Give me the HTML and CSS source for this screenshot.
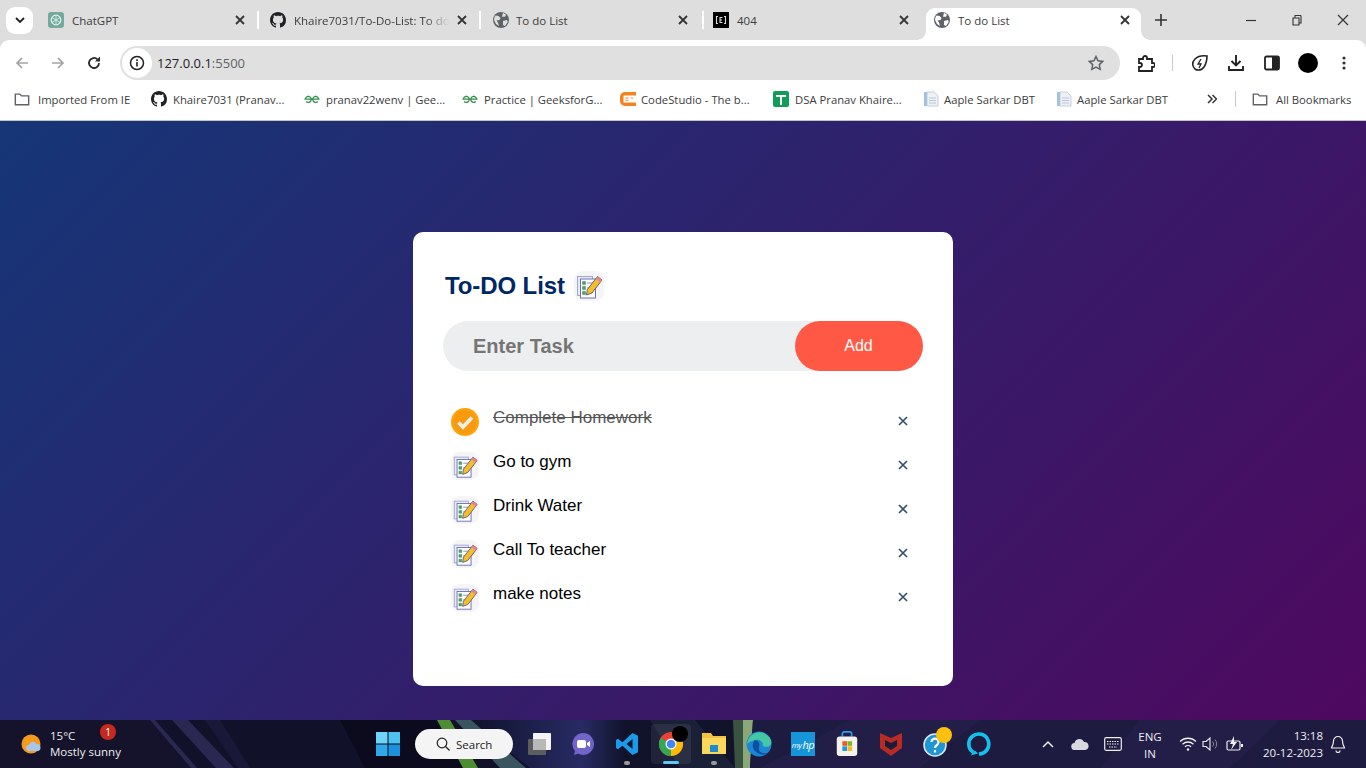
FILE: index.html
```html
<!DOCTYPE html>
<html lang="en">
<head>
<meta charset="utf-8">
<title>To do List</title>
<link rel="stylesheet" href="styles.css">
</head>
<body>
<svg class="defs" width="0" height="0" aria-hidden="true">
  <defs>
    <symbol id="globe" viewBox="0 0 16 16"><circle cx="8" cy="8" r="8" fill="#5f6368"/><path d="M2.500 3.500l3 .5 2 2-1 2-3 .5 1.500 2 1 3.500-3-2-2-4 .5-3zM10 .8l3 2-1 2-3 0zM10 9l4-1 .8 2-2.800 4-2-1z" fill="#dedede"/></symbol>
    <symbol id="globe-w" viewBox="0 0 16 16"><circle cx="8" cy="8" r="8" fill="#5f6368"/><path d="M2.500 3.500l3 .5 2 2-1 2-3 .5 1.500 2 1 3.500-3-2-2-4 .5-3zM10 .8l3 2-1 2-3 0zM10 9l4-1 .8 2-2.800 4-2-1z" fill="#fff"/></symbol>
    <symbol id="cross" viewBox="0 0 10 10"><path d="M1 1l8 8M9 1l-8 8" stroke="#333" stroke-width="1.800" fill="none"/></symbol>
    <symbol id="folder" viewBox="0 0 18 16"><path d="M1.500 2.500h5l2 2h8v10h-15z" fill="none" stroke="#5f6368" stroke-width="1.600"/></symbol>
    <symbol id="github" viewBox="0 0 16 16"><path fill="#202124" d="M8 0C3.580 0 0 3.580 0 8c0 3.540 2.290 6.530 5.470 7.590.4.07.55-.17.55-.38 0-.19-.01-.82-.01-1.490-2.010.37-2.530-.49-2.690-.94-.09-.23-.48-.94-.82-1.130-.28-.15-.68-.52-.01-.53.63-.01 1.080.58 1.230.82.72 1.210 1.870.87 2.330.66.07-.52.28-.87.51-1.070-1.780-.2-3.640-.89-3.640-3.950 0-.87.31-1.590.82-2.150-.08-.2-.36-1.020.08-2.120 0 0 .67-.21 2.200.82.64-.18 1.320-.27 2-.27s1.360.09 2 .27c1.530-1.040 2.200-.82 2.200-.82.44 1.100.16 1.920.08 2.120.51.56.82 1.270.82 2.150 0 3.070-1.870 3.750-3.650 3.950.29.25.54.73.54 1.480 0 1.070-.01 1.930-.01 2.200 0 .21.15.46.55.38A8 8 0 0 0 16 8c0-4.420-3.580-8-8-8z"/></symbol>
    <symbol id="gfg" viewBox="0 0 16 16"><path d="M.5 8.200h15M1.300 8.200a3 3 0 1 1 .9 2.300M14.700 8.200a3 3 0 1 0-.9 2.300M7.300 8.200a3 3 0 0 0-4.600-2.300M8.700 8.200a3 3 0 0 1 4.600-2.300" fill="none" stroke="#2f8d46" stroke-width="1.200"/></symbol>
    <symbol id="doc" viewBox="0 0 16 16"><path d="M1 1h4v14H1z" fill="#9cc3e6"/><path d="M4 1h7l4 4v10H4z" fill="#eef2f7" stroke="#b8c4d4" stroke-width=".8"/><path d="M6 7h7M6 9.500h7M6 12h7" stroke="#b9c6d6"/></symbol>
    <symbol id="notes" viewBox="0 0 30 30">
      <rect x="0" y="0" width="30" height="30" rx="9" fill="#f5f5f8"/>
      <rect x="3.500" y="5.500" width="15" height="19" fill="#e8eaf6" stroke="#a2a5d4"/>
      <rect x="6.500" y="8" width="15" height="19" fill="#fff" stroke="#6d71b5"/>
      <path d="M8.500 10.500h3v3h-3zM8.500 15.500h3v3h-3zM8.500 20.500h3v3h-3z" fill="#4fa36b" stroke="#3d8c58" stroke-width=".5"/>
      <path d="M13 12h6M13 17h2M13 22h2" stroke="#8d90c8"/>
      <path d="M23.500 5.500l4.500 3.500-10 13-5.500 2 .8-5.500z" fill="#f6bd2a" stroke="#55557a" stroke-width=".9"/>
      <path d="M23.500 5.500l4.500 3.500-1.800 2.300-4.500-3.500z" fill="#e8808e"/>
    </symbol>
    <symbol id="task-x" viewBox="0 0 10 10"><path d="M1 1l8 8M9 1l-8 8" stroke="#33506f" stroke-width="1.700"/></symbol>
    <linearGradient id="wall-blue" gradientUnits="userSpaceOnUse" x1="480" y1="0" x2="625" y2="0">
      <stop offset="0" stop-color="#12142f"/>
      <stop offset=".7" stop-color="#272b63"/>
      <stop offset="1" stop-color="#11132b"/>
    </linearGradient>
  </defs>
</svg>

<header class="chrome">
  <div class="tabstrip">
    <div class="tablist-btn"><svg width="10" height="6" viewBox="0 0 10 6"><path d="M1 1l4 4 4-4" stroke="#222" stroke-width="1.800" fill="none"/></svg></div>
    <div class="tab tab-a">
      <svg class="fav" viewBox="0 0 16 16"><rect width="16" height="16" rx="3" fill="#74aa9c"/><circle cx="8" cy="8" r="4.800" fill="none" stroke="#e5f0ed" stroke-width="1.200"/><path d="M8 3.200v9.600M3.800 5.600l8.400 4.800M12.200 5.600l-8.400 4.800" stroke="#e5f0ed" stroke-width=".8"/></svg>
      <span class="tab-title">ChatGPT</span>
      <svg class="tab-x"><use href="#cross"/></svg>
    </div>
    <i class="tab-sep"></i>
    <div class="tab tab-b">
      <svg class="fav"><use href="#github"/></svg>
      <span class="tab-title fade">Khaire7031/To-Do-List: To do</span>
      <svg class="tab-x"><use href="#cross"/></svg>
    </div>
    <i class="tab-sep"></i>
    <div class="tab tab-c">
      <svg class="fav"><use href="#globe"/></svg>
      <span class="tab-title">To do List</span>
      <svg class="tab-x"><use href="#cross"/></svg>
    </div>
    <i class="tab-sep"></i>
    <div class="tab tab-d">
      <svg class="fav" viewBox="0 0 16 16"><rect width="16" height="16" fill="#000"/><path d="M5 4.500H3.500v7H5M11 4.500h1.500v7H11M9.500 5.500H7v5h2.500M7 8h2" fill="none" stroke="#ddd" stroke-width="1.100"/></svg>
      <span class="tab-title">404</span>
      <svg class="tab-x"><use href="#cross"/></svg>
    </div>
    <div class="tab tab-active">
      <svg class="fav"><use href="#globe-w"/></svg>
      <span class="tab-title">To do List</span>
      <svg class="tab-x"><use href="#cross"/></svg>
    </div>
    <svg class="newtab" width="12" height="12" viewBox="0 0 12 12"><path d="M6 0v12M0 6h12" stroke="#333" stroke-width="1.600"/></svg>
    <div class="winctl">
      <svg width="12" height="12" viewBox="0 0 12 12"><path d="M1 6.500h10" stroke="#333" stroke-width="1.200"/></svg>
      <svg width="12" height="12" viewBox="0 0 12 12"><path d="M2 4h6v7H2zM4 4V1.500h5.500l.5.500v7H8" fill="none" stroke="#333" stroke-width="1.100"/></svg>
      <svg width="12" height="12" viewBox="0 0 12 12"><path d="M1 1l10 10M11 1L1 11" stroke="#333" stroke-width="1.200"/></svg>
    </div>
  </div>
  <div class="toolbar">
    <svg class="nav nav-back" viewBox="0 0 16 16"><path d="M14 8H3M8 3L3 8l5 5" fill="none" stroke="#a2a4a6" stroke-width="1.700"/></svg>
    <svg class="nav nav-fwd" viewBox="0 0 16 16"><path d="M2 8h11M8 3l5 5-5 5" fill="none" stroke="#a2a4a6" stroke-width="1.700"/></svg>
    <svg class="nav nav-reload" viewBox="0 0 16 16"><path d="M13 8a5 5 0 1 1-1.500-3.600" fill="none" stroke="#2a2a2a" stroke-width="1.800"/><path d="M14 1.500V6.500H9z" fill="#2a2a2a"/></svg>
    <div class="omnibox">
      <div class="site-info"><svg width="16" height="16" viewBox="0 0 16 16"><circle cx="8" cy="8" r="6.500" fill="none" stroke="#222" stroke-width="1.500"/><path d="M8 7v4.500M8 4.300v1.600" stroke="#222" stroke-width="1.600"/></svg></div>
      <span class="url">127.0.0.1<span class="port">:5500</span></span>
      <svg class="star" width="16" height="16" viewBox="0 0 16 16"><path d="M8 1.500l2 4.300 4.700.6-3.400 3.200.9 4.700L8 12l-4.200 2.300.9-4.700L1.300 6.400 6 5.800z" fill="none" stroke="#5f6368" stroke-width="1.500"/></svg>
    </div>
    <div class="tools">
      <svg class="t-ext" width="18" height="18" viewBox="0 0 18 18"><path d="M2 5h4V4a2 2 0 0 1 4 0v1h5v4h1a2 2 0 0 1 0 4h-1v4H2v-4h1a2 2 0 0 0 0-4H2z" fill="none" stroke="#222" stroke-width="1.800"/></svg>
      <i class="t-sep"></i>
      <svg class="t-perf" width="18" height="18" viewBox="0 0 18 18"><path d="M16 2c0 0-8-1-12 3S2 13 4 15c3 2 7 1 9-2s3-8 3-11z" fill="none" stroke="#222" stroke-width="1.600"/><path d="M10 5l-3 5h3l-2 4" fill="none" stroke="#222" stroke-width="1.300"/></svg>
      <svg class="t-dl" width="16" height="18" viewBox="0 0 16 18"><path d="M8 1v10M3.500 7L8 11.500 12.500 7M1 12v4h14v-4" fill="none" stroke="#222" stroke-width="1.900"/></svg>
      <svg class="t-side" width="16" height="16" viewBox="0 0 16 16"><rect x="1" y="1.500" width="14" height="13" rx="1.500" fill="#fff" stroke="#222" stroke-width="1.800"/><rect x="8" y="1.500" width="7" height="13" fill="#222"/></svg>
      <i class="t-avatar"></i>
      <svg class="t-menu" width="4" height="14" viewBox="0 0 4 14"><circle cx="2" cy="2" r="1.600" fill="#333"/><circle cx="2" cy="7" r="1.600" fill="#333"/><circle cx="2" cy="12" r="1.600" fill="#333"/></svg>
    </div>
  </div>
  <nav class="bookmarks">
    <a class="bm bm1"><svg class="bm-ico"><use href="#folder"/></svg>Imported From IE</a>
    <a class="bm bm2"><svg class="bm-ico"><use href="#github"/></svg>Khaire7031 (Pranav...</a>
    <a class="bm bm3"><svg class="bm-ico"><use href="#gfg"/></svg>pranav22wenv | Gee...</a>
    <a class="bm bm4"><svg class="bm-ico"><use href="#gfg"/></svg>Practice | GeeksforG...</a>
    <a class="bm bm5"><svg class="bm-ico" viewBox="0 0 16 16"><path d="M5 1h11v14H5a5 5 0 0 1-5-5V6a5 5 0 0 1 5-5z" fill="#f58220"/><path d="M3.500 4.500h12.500v7H3.500z" fill="#fff"/><path d="M5.500 7h3M5.500 9.300h3M11 7h2" stroke="#f58220" stroke-width="1.100"/></svg>CodeStudio - The b...</a>
    <a class="bm bm6"><svg class="bm-ico" viewBox="0 0 16 16"><rect width="16" height="16" rx="2" fill="#0f9d58"/><path d="M3 5h10M8 5v9" stroke="#fff" stroke-width="2"/></svg>DSA Pranav Khaire...</a>
    <a class="bm bm7"><svg class="bm-ico"><use href="#doc"/></svg>Aaple Sarkar DBT</a>
    <a class="bm bm8"><svg class="bm-ico"><use href="#doc"/></svg>Aaple Sarkar DBT</a>
    <svg class="chev" width="10" height="10" viewBox="0 0 10 10"><path d="M1 1l4 4-4 4M5.500 1l4 4-4 4" fill="none" stroke="#333" stroke-width="1.500"/></svg>
    <i class="bm-sep"></i>
    <a class="bm bm9"><svg class="bm-ico"><use href="#folder"/></svg>All Bookmarks</a>
  </nav>
</header>

<main class="page">
  <section class="todo-app">
    <h2 class="todo-title">To-DO List <svg class="title-icon"><use href="#notes"/></svg></h2>
    <div class="add-row">
      <span class="placeholder">Enter Task</span>
      <button class="add-btn" type="button">Add</button>
    </div>
    <ul class="tasks">
      <li class="task done">
        <svg class="task-icon" viewBox="0 0 28 28"><circle cx="14" cy="14" r="14" fill="#ffa20a"/><circle cx="14" cy="14" r="11.500" fill="#f89a10"/><path d="M7.500 14.500l4.500 4.500 9-9.500" fill="none" stroke="#f3eee6" stroke-width="3.800"/></svg>
        <span class="task-text">Complete Homework</span>
        <svg class="task-x"><use href="#task-x"/></svg>
      </li>
      <li class="task"><svg class="task-icon"><use href="#notes"/></svg><span class="task-text">Go to gym</span><svg class="task-x"><use href="#task-x"/></svg></li>
      <li class="task"><svg class="task-icon"><use href="#notes"/></svg><span class="task-text">Drink Water</span><svg class="task-x"><use href="#task-x"/></svg></li>
      <li class="task"><svg class="task-icon"><use href="#notes"/></svg><span class="task-text">Call To teacher</span><svg class="task-x"><use href="#task-x"/></svg></li>
      <li class="task"><svg class="task-icon"><use href="#notes"/></svg><span class="task-text">make notes</span><svg class="task-x"><use href="#task-x"/></svg></li>
    </ul>
  </section>
</main>

<footer class="taskbar">
  <svg class="wallpaper" width="1366" height="48" viewBox="0 0 1366 48" aria-hidden="true">
    <rect width="1366" height="48" fill="#12112a"/>
    <path d="M0 0h150L190 48H0z" fill="#15132c"/>
    <path d="M150 0h5l42 48h-6zM172 0h16l46 48h-18z" fill="#2a2750"/>
    <path d="M205 0h15l30 48h-12z" fill="#1a1838"/>
    <path d="M340 0h95l30 48H365z" fill="#0c0b1d"/>
    <path d="M470 0h155v48H530z" fill="url(#wall-blue)"/>
    <path d="M455 0h16l55 48h-26z" fill="#3a5560"/>
    <path d="M437 0h13l28 48h-15z" fill="#4f8d34"/>
    <path d="M625 0h110v48H625z" fill="#10132a"/>
    <path d="M650 0h45l40 48h-55z" fill="#1a2036"/>
    <path d="M733 0h10v48h-8z" fill="#3a5341"/>
    <path d="M743 0h10l-3 48h-7z" fill="#8aa87a"/>
    <path d="M753 0h613v48H750z" fill="#1e1b40"/>
    <path d="M760 48l90-48h130l-60 48zM1140 0h140l-50 48h-130z" fill="#221e48"/>
  </svg>
  <div class="weather">
    <svg width="22" height="22" viewBox="0 0 22 22"><circle cx="10" cy="11" r="9.500" fill="#f59a1b"/><path d="M8 18a3 3 0 0 1 0-6 4 4 0 0 1 7.500-1 3.500 3.500 0 0 1 4 3.500 3 3 0 0 1-3 3.500z" fill="#a8c6ec"/></svg>
    <div class="weather-text"><span>15°C</span><span>Mostly sunny</span></div>
    <b class="badge">1</b>
  </div>
  <div class="center-icons">
    <svg class="ti-win" width="24" height="24" viewBox="0 0 24 24"><path d="M0 0h11.500v11.500H0z" fill="#6fd5f8"/><path d="M12.500 0H24v11.500H12.500z" fill="#4cc2f1"/><path d="M0 12.500h11.500V24H0z" fill="#2ea8e8"/><path d="M12.500 12.500H24V24H12.500z" fill="#1b90dd"/></svg>
    <div class="search"><svg width="14" height="14" viewBox="0 0 14 14"><circle cx="6" cy="6" r="4.800" fill="none" stroke="#222" stroke-width="1.200"/><path d="M9.500 9.500l4 4" stroke="#222" stroke-width="1.300"/></svg><span>Search</span></div>
    <svg class="ti ti-task" width="24" height="24" viewBox="0 0 24 24"><rect x="5" y="1" width="18" height="17" rx="1" fill="#f4f4f4"/><rect x="0" y="7" width="18" height="16" rx="1" fill="#5d5d5d"/><rect x="5" y="7" width="13" height="11" fill="#b8b8b8"/></svg>
    <svg class="ti ti-meet" width="24" height="24" viewBox="0 0 24 24"><path d="M12 1a11 11 0 1 1-5 20.800L3 23l1-4A11 11 0 0 1 12 1z" fill="#7165c9"/><rect x="6" y="8" width="9" height="8" rx="2" fill="#fff"/><path d="M16 11l3-2v6l-3-2z" fill="#fff"/></svg>
    <div class="ti-wrap"><svg class="ti" width="24" height="24" viewBox="0 0 24 24"><path fill-rule="evenodd" d="M17.500 1L23 3.700V20.300L17.500 23 7.500 13.800 3 17.300 1 16V8L3 6.700 7.500 10.200zM17.500 7l-6 5 6 5z" fill="#1a9ae8"/></svg><i class="dot"></i></div>
    <div class="ti-wrap chrome-tile"><svg class="ti" width="24" height="24" viewBox="0 0 24 24"><circle cx="12" cy="12" r="12" fill="#ea4335"/><path d="M12 12L1.600 6A12 12 0 0 0 12 24z" fill="#34a853"/><path d="M12 12v12A12 12 0 0 0 23 7H12z" fill="#fbbc05"/><circle cx="12" cy="12" r="5.500" fill="#fff"/><circle cx="12" cy="12" r="4.300" fill="#4285f4"/></svg><i class="chrome-badge"></i><i class="active-bar"></i></div>
    <div class="ti-wrap ti-folder"><svg class="ti" width="26" height="24" viewBox="0 0 26 24"><path d="M1 1h9l2 3h13v18H1z" fill="#f5c242"/><path d="M1 6h24v16H1z" fill="#fbd75b"/><path d="M9 13h8v7H9z" fill="#1e88d2"/></svg><i class="dot dot-folder"></i></div>
    <svg class="ti ti-edge" width="26" height="26" viewBox="0 0 26 26"><circle cx="13" cy="13" r="12.500" fill="#1b86d4"/><path d="M1 13A12.500 12.500 0 0 1 25 9c1 3 0 7-5 7-3 0-4-1.500-3-3-1-3-4-5-8-4-4 1-7 3-8 4z" fill="#44c7a4"/><path d="M9 9c-3 3-3 8 0 11s8 5 12 2c-6 1-9-2-8-6s0-6-4-7z" fill="#0e4f9e"/></svg>
    <div class="ti ti-hp"><span>my</span><span class="hp">hp</span></div>
    <svg class="ti ti-store" width="24" height="26" viewBox="0 0 24 28"><path d="M7 6V3a2 2 0 0 1 2-2h6a2 2 0 0 1 2 2v3" fill="none" stroke="#2aa0ea" stroke-width="1.800"/><rect x="1" y="6" width="22" height="21" rx="3" fill="#f5f2ee"/><path d="M7 11h5v5H7z" fill="#ee5a2a"/><path d="M12.500 11h5v5h-5z" fill="#7cb82a"/><path d="M7 16.500h5v5H7z" fill="#1e9ae0"/><path d="M12.500 16.500h5v5h-5z" fill="#fbb81c"/></svg>
    <svg class="ti ti-mcafee" width="24" height="24" viewBox="0 0 24 24"><path d="M1 1l11 5 11-5v15l-11 8-11-8z" fill="#b62c25"/><path d="M6 8l6 3 6-3v6l-6 4-6-4z" fill="#1d1b36"/></svg>
    <div class="ti ti-help"><svg width="26" height="26" viewBox="0 0 26 26"><circle cx="12" cy="14" r="11" fill="#1f95d6" stroke="#dfeaf4" stroke-width="1.500"/><path d="M8.500 11a3.500 3.500 0 1 1 6 2.500c-1.500 1-2.500 1.500-2.500 3.500M12 19v2.500" fill="none" stroke="#fff" stroke-width="2.200"/></svg><i class="help-dot"></i></div>
    <svg class="ti ti-alexa" width="24" height="24" viewBox="0 0 24 24"><path d="M6.500 20.500A10 10 0 1 1 12 22" fill="none" stroke="#12c2ee" stroke-width="3.600"/><path d="M3.500 23.500l4.500-5 3 3z" fill="#12c2ee"/></svg>
  </div>
  <div class="tray">
    <svg class="tr-up" width="12" height="8" viewBox="0 0 12 8"><path d="M1 7l5-5 5 5" fill="none" stroke="#eee" stroke-width="1.500"/></svg>
    <svg class="tr-cloud" width="18" height="12" viewBox="0 0 18 12"><path d="M4 12a3.500 3.500 0 0 1-.5-7A5 5 0 0 1 13 4a4 4 0 0 1 1 8z" fill="#d8d8de"/></svg>
    <svg class="tr-kbd" width="18" height="14" viewBox="0 0 18 14"><rect x=".7" y=".7" width="16.600" height="12.600" rx="1.500" fill="none" stroke="#eee" stroke-width="1.200"/><path d="M3 4.500h12M3 7h12M5 10h8" stroke="#eee" stroke-width="1.100" stroke-dasharray="1.500 1"/></svg>
    <div class="lang"><span>ENG</span><span>IN</span></div>
    <svg class="tr-wifi" width="18" height="14" viewBox="0 0 18 14"><path d="M1 4.500a11.500 11.500 0 0 1 16 0M3.500 7.200a8 8 0 0 1 11 0M6 9.800a4.300 4.300 0 0 1 6 0" fill="none" stroke="#eee" stroke-width="1.300"/><circle cx="9" cy="12.500" r="1.200" fill="#eee"/></svg>
    <svg class="tr-vol" width="16" height="14" viewBox="0 0 16 14"><path d="M1 4.500h3L8 1v12L4 9.500H1z" fill="none" stroke="#eee" stroke-width="1.100"/><path d="M10.500 4.500a3.500 3.500 0 0 1 0 5M13 2.500a7 7 0 0 1 0 9" fill="none" stroke="#8a8a8f" stroke-width="1"/></svg>
    <svg class="tr-bat" width="18" height="16" viewBox="0 0 18 16"><rect x="1" y="5" width="13" height="9" rx="1.500" fill="none" stroke="#eee" stroke-width="1.200"/><path d="M15 8h2v3h-2z" fill="#eee"/><path d="M8 0L4 8h3l-2 6 6-8H8z" fill="#eee"/></svg>
    <div class="clock"><span>13:18</span><span>20-12-2023</span></div>
    <svg class="tr-bell" width="16" height="18" viewBox="0 0 16 18"><path d="M8 1.500a4.500 4.500 0 0 0-4.500 4.500c0 4-2 6-2 7h13c0-1-2-3-2-7A4.500 4.500 0 0 0 8 1.500zM6 15.500a2 2 0 0 0 4 0" fill="none" stroke="#eee" stroke-width="1.200"/></svg>
  </div>
</footer>
</body>
</html>
```
FILE: styles.css
```css
* { box-sizing: border-box; }
html, body { margin: 0; height: 768px; overflow: hidden; }
body { width: 1366px; display: flex; flex-direction: column; font-family: "Liberation Sans", Arial, sans-serif; }
.defs { position: absolute; }

/* browser chrome */
.chrome { height: 121px; flex: none; background: #dedede; border-bottom: 1px solid #c4c4c4; font-family: "Open Sans", "Noto Sans", sans-serif; color: #3c3c3c; }
.tabstrip { height: 40px; display: flex; align-items: center; }
.tablist-btn { width: 27px; height: 27px; margin-left: 6px; background: #fff; border-radius: 9px; display: flex; align-items: center; justify-content: center; flex: none; }
.tab { height: 32px; display: flex; align-items: center; flex: none; font-size: 11.500px; }
.tab-a { width: 220px; padding-left: 10px; margin-left: 5px; }
.tab-b { width: 222px; padding-left: 12px; }
.tab-c { width: 223px; padding-left: 13px; }
.tab-d { width: 223px; padding-left: 10px; }
.tab-active { width: 215px; align-self: flex-end; padding: 0 0 8px 8px; background: #fff; border-radius: 9px 9px 0 0; position: relative; }
.tab-active::before, .tab-active::after { content: ""; position: absolute; bottom: 0; width: 9px; height: 9px; }
.tab-active::before { left: -9px; background: radial-gradient(circle at 0 0, transparent 8.500px, #fff 9px); }
.tab-active::after { right: -9px; background: radial-gradient(circle at 100% 0, transparent 8.500px, #fff 9px); }
.fav { width: 16px; height: 16px; flex: none; }
.tab-title { margin-left: 8px; flex: 1; white-space: nowrap; overflow: hidden; }
.tab-c .tab-title { margin-left: 7px; }
.fade { -webkit-mask-image: linear-gradient(90deg, #000 85%, transparent); mask-image: linear-gradient(90deg, #000 85%, transparent); }
.tab-x { width: 10px; height: 10px; flex: none; margin-left: 8px; }
.tab-a .tab-x, .tab-b .tab-x { margin-right: 13px; }
.tab-c .tab-x { margin-right: 15px; }
.tab-d .tab-x { margin-right: 17px; }
.tab-active .tab-x { margin-right: 11px; }
.tab-sep { width: 2px; height: 18px; background: #fff; flex: none; margin: 0 -1px; }
.newtab { flex: none; margin-left: 14px; }
.winctl { margin-left: auto; display: flex; gap: 34px; padding-right: 17px; }

.toolbar { height: 46px; display: flex; align-items: center; background: #fff; border-radius: 9px 9px 0 0; }
.nav { width: 16px; height: 16px; flex: none; margin-left: 20px; }
.nav-back { margin-left: 14px; }
.omnibox { width: 1000px; height: 34px; margin-left: 18px; background: #e0e0e0; border-radius: 17px; display: flex; align-items: center; padding-left: 2px; flex: none; }
.site-info { width: 30px; height: 30px; background: #fff; border-radius: 50%; display: flex; align-items: center; justify-content: center; }
.url { margin-left: 5px; font-size: 13px; color: #222; }
.port { color: #5f6368; }
.star { margin-left: auto; margin-right: 16px; }
.tools { display: flex; align-items: center; flex: none; margin-left: 17px; }
.t-sep { width: 1px; height: 16px; background: #c8c8c8; margin: 0 18px 0 17px; }
.t-dl { margin-left: 19px; }
.t-side { margin-left: 20px; }
.t-avatar { width: 20px; height: 20px; background: #000; border-radius: 50%; margin-left: 18px; }
.t-menu { margin-left: 24px; }

.bookmarks { height: 34px; padding-bottom: 8px; display: flex; align-items: center; font-size: 11.300px; background: #fff; }
.bm { display: flex; align-items: center; white-space: nowrap; flex: none; }
.bm-ico { width: 16px; height: 16px; margin-right: 6px; flex: none; }
.bm1 { margin-left: 14px; width: 137px; }
.bm1 .bm-ico, .bm9 .bm-ico { margin-right: 8px; }
.bm2 { width: 153px; }
.bm3 { width: 158px; }
.bm4 { width: 158px; }
.bm5 { width: 153px; }
.bm5 .bm-ico, .bm7 .bm-ico, .bm8 .bm-ico { margin-right: 5px; }
.bm6 { width: 150px; }
.bm7 { width: 133px; }
.bm8 { width: 143px; }
.chev { margin-left: 8px; flex: none; }
.bm-sep { width: 1px; height: 16px; background: #c8c8c8; margin-left: 18px; flex: none; }
.bm9 { margin-left: 16px; }

/* page */
.page { height: 599px; flex: none; background: linear-gradient(135deg, #153677, #4e085f); padding-top: 111px; }
.todo-app { width: 540px; height: 454px; margin: 0 auto; background: #fff; border-radius: 10px; padding: 40px 30px 70px; }
.todo-title { margin: 0 0 21px; height: 28px; display: flex; align-items: center; color: #002765; font-size: 24px; font-weight: 700; padding-left: 2px; letter-spacing: -.1px; }
.title-icon { width: 30px; height: 30px; margin-left: 9px; flex: none; }
.add-row { height: 50px; display: flex; align-items: center; justify-content: space-between; background: #edeef0; border-radius: 30px; padding-left: 30px; margin-bottom: 25px; }
.placeholder { font-size: 20px; font-weight: 700; color: #757575; }
.add-btn { width: 128px; height: 50px; border: 0; padding: 0 1px 1px 0; background: #ff5945; color: #fff; font: 16px "Liberation Sans", Arial, sans-serif; border-radius: 40px; }
.tasks { list-style: none; margin: 0; padding: 0; }
.task { height: 44px; position: relative; padding: 12px 8px 12px 50px; font-size: 17px; line-height: 20px; color: #000; }
.task-icon { position: absolute; left: 8px; top: 12px; width: 28px; height: 28px; }
.task-x { position: absolute; left: 455px; top: 20px; width: 10px; height: 10px; }
.done .task-text { color: #555; text-decoration: line-through; }

/* taskbar */
.taskbar { height: 48px; flex: 1; position: relative; color: #eee; font-family: "Open Sans", "Noto Sans", sans-serif; overflow: hidden; }
.wallpaper { position: absolute; left: 0; top: 0; display: block; }
.weather { position: absolute; left: 21px; top: 0; width: 110px; height: 48px; display: flex; align-items: center; }
.weather-text { margin-left: 7px; display: flex; flex-direction: column; font-size: 11.500px; line-height: 16px; }
.badge { position: absolute; left: 79px; top: 4px; width: 16px; height: 16px; border-radius: 50%; background: #c62a1e; color: #fff; font-size: 10px; font-weight: 400; line-height: 16px; text-align: center; }
.center-icons { position: absolute; left: 376px; top: 0; height: 48px; display: flex; align-items: center; }
.ti { flex: none; display: block; }
.ti-win { flex: none; }
.search { width: 98px; height: 30px; margin-left: 15px; background: #f4f4f4; border-radius: 15px; color: #222; display: flex; align-items: center; padding-left: 21px; font-size: 11.500px; flex: none; }
.search span { margin-left: 6px; }
.ti-task { margin-left: 15px; }
.ti-meet { margin-left: 19px; }
.ti-wrap { position: relative; flex: none; margin-left: 20px; display: flex; }
.dot { position: absolute; bottom: -9px; left: 9px; width: 6px; height: 4px; border-radius: 2px; background: #9a9a9a; }
.dot-folder { left: 10px; }
.chrome-tile { width: 40px; height: 40px; margin-left: 12px; background: rgba(255,255,255,.07); border-radius: 4px; align-items: center; justify-content: center; }
.chrome-badge { position: absolute; right: 3px; top: 2px; width: 16px; height: 16px; border-radius: 50%; background: #000; }
.active-bar { position: absolute; left: 12px; bottom: 0; width: 16px; height: 3px; border-radius: 2px; background: #5cc8f5; }
.ti-folder { margin-left: 10px; }
.ti-edge { margin-left: 19px; }
.ti-hp { margin-left: 19px; width: 24px; height: 24px; background: #1695d8; color: #fff; font-size: 8px; font-style: italic; display: flex; align-items: center; justify-content: center; letter-spacing: -.5px; }
.hp { font-size: 11px; margin-left: 1px; }
.ti-store { margin-left: 20px; }
.ti-mcafee { margin-left: 20px; }
.ti-help { margin-left: 20px; position: relative; width: 26px; height: 26px; }
.help-dot { position: absolute; right: -3px; top: -4px; width: 16px; height: 16px; border-radius: 50%; background: #fbc10e; }
.ti-alexa { margin-left: 18px; }
.tray { position: absolute; left: 1042px; top: 0; height: 48px; width: 324px; display: flex; align-items: center; }
.tr-cloud { margin-left: 17px; }
.tr-kbd { margin-left: 15px; }
.lang { margin: 2px 0 0 13px; width: 30px; display: flex; flex-direction: column; align-items: center; font-size: 11.500px; line-height: 17px; }
.tr-wifi { margin-left: 14px; }
.tr-vol { margin-left: 5px; }
.tr-bat { margin-left: 8px; }
.clock { margin-left: 15px; width: 64px; display: flex; flex-direction: column; align-items: flex-end; font-size: 11.500px; line-height: 17px; }
.tr-bell { margin-left: 7px; }
```
